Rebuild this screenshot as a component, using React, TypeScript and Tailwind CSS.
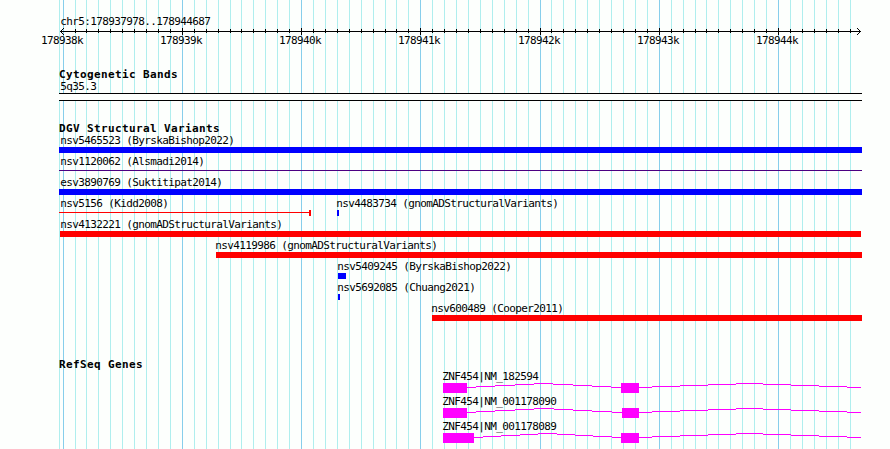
interface Feature {
  name: string;
  labelX: number;
  start: number;
  end: number;
  kind: "gain" | "loss" | "complex" | "range";
}

interface Gene {
  name: string;
  exons: [number, number][];
  introns: number[][];
}

const MINOR_STEP = 11.924;
const gridLines = Array.from({ length: 67 }, (_, i) => ({
  x: Math.floor(63.1 + i * MINOR_STEP),
  major: i % 10 === 0,
}));

const lanes: Feature[][] = [
  [{ name: "nsv5465523 (ByrskaBishop2022)", labelX: 60.2, start: 59, end: 862, kind: "gain" }],
  [{ name: "nsv1120062 (Alsmadi2014)", labelX: 60.2, start: 59, end: 862, kind: "complex" }],
  [{ name: "esv3890769 (Suktitipat2014)", labelX: 60.2, start: 59, end: 862, kind: "gain" }],
  [
    { name: "nsv5156 (Kidd2008)", labelX: 60.2, start: 59, end: 311, kind: "range" },
    { name: "nsv4483734 (gnomADStructuralVariants)", labelX: 336.2, start: 337, end: 339, kind: "gain" },
  ],
  [{ name: "nsv4132221 (gnomADStructuralVariants)", labelX: 60.2, start: 60, end: 861, kind: "loss" }],
  [{ name: "nsv4119986 (gnomADStructuralVariants)", labelX: 215.2, start: 216, end: 862, kind: "loss" }],
  [{ name: "nsv5409245 (ByrskaBishop2022)", labelX: 337.2, start: 338, end: 346, kind: "gain" }],
  [{ name: "nsv5692085 (Chuang2021)", labelX: 337.2, start: 338, end: 340, kind: "gain" }],
  [{ name: "nsv600489 (Cooper2011)", labelX: 431.2, start: 432, end: 862, kind: "loss" }],
];

// Each intron is a list of step edges, rising to the middle and falling again.
const lastIntron = [639, 652, 680, 708, 736, 763, 791, 819, 847, 861];

const genes: Gene[] = [
  {
    name: "ZNF454|NM_182594",
    exons: [[443, 467], [621, 639]],
    introns: [[467, 476, 495, 515, 534, 553, 573, 592, 611, 621], lastIntron],
  },
  {
    name: "ZNF454|NM_001178090",
    exons: [[443, 467], [622, 639]],
    introns: [[467, 476, 495, 515, 534, 554, 573, 592, 612, 622], lastIntron],
  },
  {
    name: "ZNF454|NM_001178089",
    exons: [[443, 474], [621, 639]],
    introns: [[474, 483, 501, 520, 538, 557, 575, 593, 612, 621], lastIntron],
  },
];

const Grid = () => (
  <svg className="absolute inset-0 -z-10" width={890} height={449} shapeRendering="crispEdges">
    <rect x={59} y={0} width={1} height={449} fill="#afeeee" />
    {gridLines.map((line) => (
      <rect key={line.x} x={line.x} y={0} width={1} height={449} fill={line.major ? "#87ceeb" : "#afeeee"} />
    ))}
  </svg>
);

const Ruler = () => (
  <div>
    <p className="ml-[60.2px]">chr5:178937978..178944687</p>
    <svg className="block" width={890} height={7} shapeRendering="crispEdges">
      <rect x={60} y={3} width={801} height={1} />
      <path d="M61 2h1v1h-1zM62 1h1v1h-1zM63 0h1v1h-1zM61 4h1v1h-1zM62 5h1v1h-1zM63 6h1v1h-1z" />
      <path d="M859 2h1v1h-1zM858 1h1v1h-1zM857 0h1v1h-1zM859 4h1v1h-1zM858 5h1v1h-1zM857 6h1v1h-1z" />
      {gridLines.slice(1).map((line) => (
        <rect key={line.x} x={line.x} y={line.major ? 0 : 1} width={1} height={line.major ? 7 : 4} />
      ))}
    </svg>
    <div className="grid">
      {gridLines
        .filter((line) => line.major)
        .map((line, i) => (
          <span key={line.x} className="col-start-1 row-start-1" style={{ marginLeft: line.x - 22 }}>
            {178938 + i}k
          </span>
        ))}
    </div>
  </div>
);

const TrackTitle = ({ children }: { children: string }) => (
  <h2 className="ml-[59px] h-3 text-[11px] leading-3 font-bold tracking-[0.378px]">{children}</h2>
);

const FeatureBar = ({ kind }: { kind: Feature["kind"] }) => {
  if (kind === "gain") return <div className="h-1.5 bg-[#0000ff]" />;
  if (kind === "loss") return <div className="h-1.5 bg-[#ff0000]" />;
  if (kind === "complex") {
    return (
      <div className="flex h-1.5 items-start pt-0.5">
        <div className="h-px flex-1 bg-[#4b0082]" />
      </div>
    );
  }
  return (
    <div className="flex h-1.5 items-start">
      <div className="mt-0.5 h-px flex-1 bg-[#ff0000]" />
      <div className="h-1.5 w-0.5 bg-[#ff0000]" />
    </div>
  );
};

const VariantLane = ({ features }: { features: Feature[] }) => (
  <div className="grid h-[21px]">
    {features.map((f) => (
      <div key={f.name} className="col-start-1 row-start-1">
        <p className="h-3" style={{ marginLeft: f.labelX }}>{f.name}</p>
        <div style={{ marginLeft: f.start, width: f.end - f.start }}>
          <FeatureBar kind={f.kind} />
        </div>
      </div>
    ))}
  </div>
);

const GeneRow = ({ gene }: { gene: Gene }) => (
  <div className="h-[25px]">
    <p className="ml-[442.2px] h-3">{gene.name}</p>
    <svg className="block" width={890} height={10} fill="#ff00ff" shapeRendering="crispEdges">
      {gene.introns.map((edges) =>
        edges.slice(1).map((end, i) => (
          <rect key={end} x={edges[i]} y={Math.abs(i - 4)} width={end - edges[i]} height={1} />
        ))
      )}
      {gene.exons.map(([start, end]) => (
        <rect key={start} x={start} y={0} width={end - start} height={10} />
      ))}
    </svg>
  </div>
);

const App = () => {
  return (
    <div className="relative isolate h-[449px] w-[890px] overflow-hidden bg-[#fdfffd] pt-[16px] font-['DejaVu_Sans_Mono',monospace] text-[11px] leading-3 tracking-[-0.622px] whitespace-pre text-black">
      <Grid />
      <Ruler />

      <section className="mt-[22px]">
        <TrackTitle>Cytogenetic Bands</TrackTitle>
        <p className="ml-[60.2px] h-3">5q35.3</p>
        <div className="ml-[59px] h-2 w-[803px] border-y border-black bg-[#fdfffd]" />
      </section>

      <section className="mt-[22px]">
        <TrackTitle>DGV Structural Variants</TrackTitle>
        {lanes.map((features) => (
          <VariantLane key={features[0].name} features={features} />
        ))}
      </section>

      <section className="mt-[35px]">
        <TrackTitle>RefSeq Genes</TrackTitle>
        {genes.map((gene) => (
          <GeneRow key={gene.name} gene={gene} />
        ))}
      </section>
    </div>
  );
};

export default App;
